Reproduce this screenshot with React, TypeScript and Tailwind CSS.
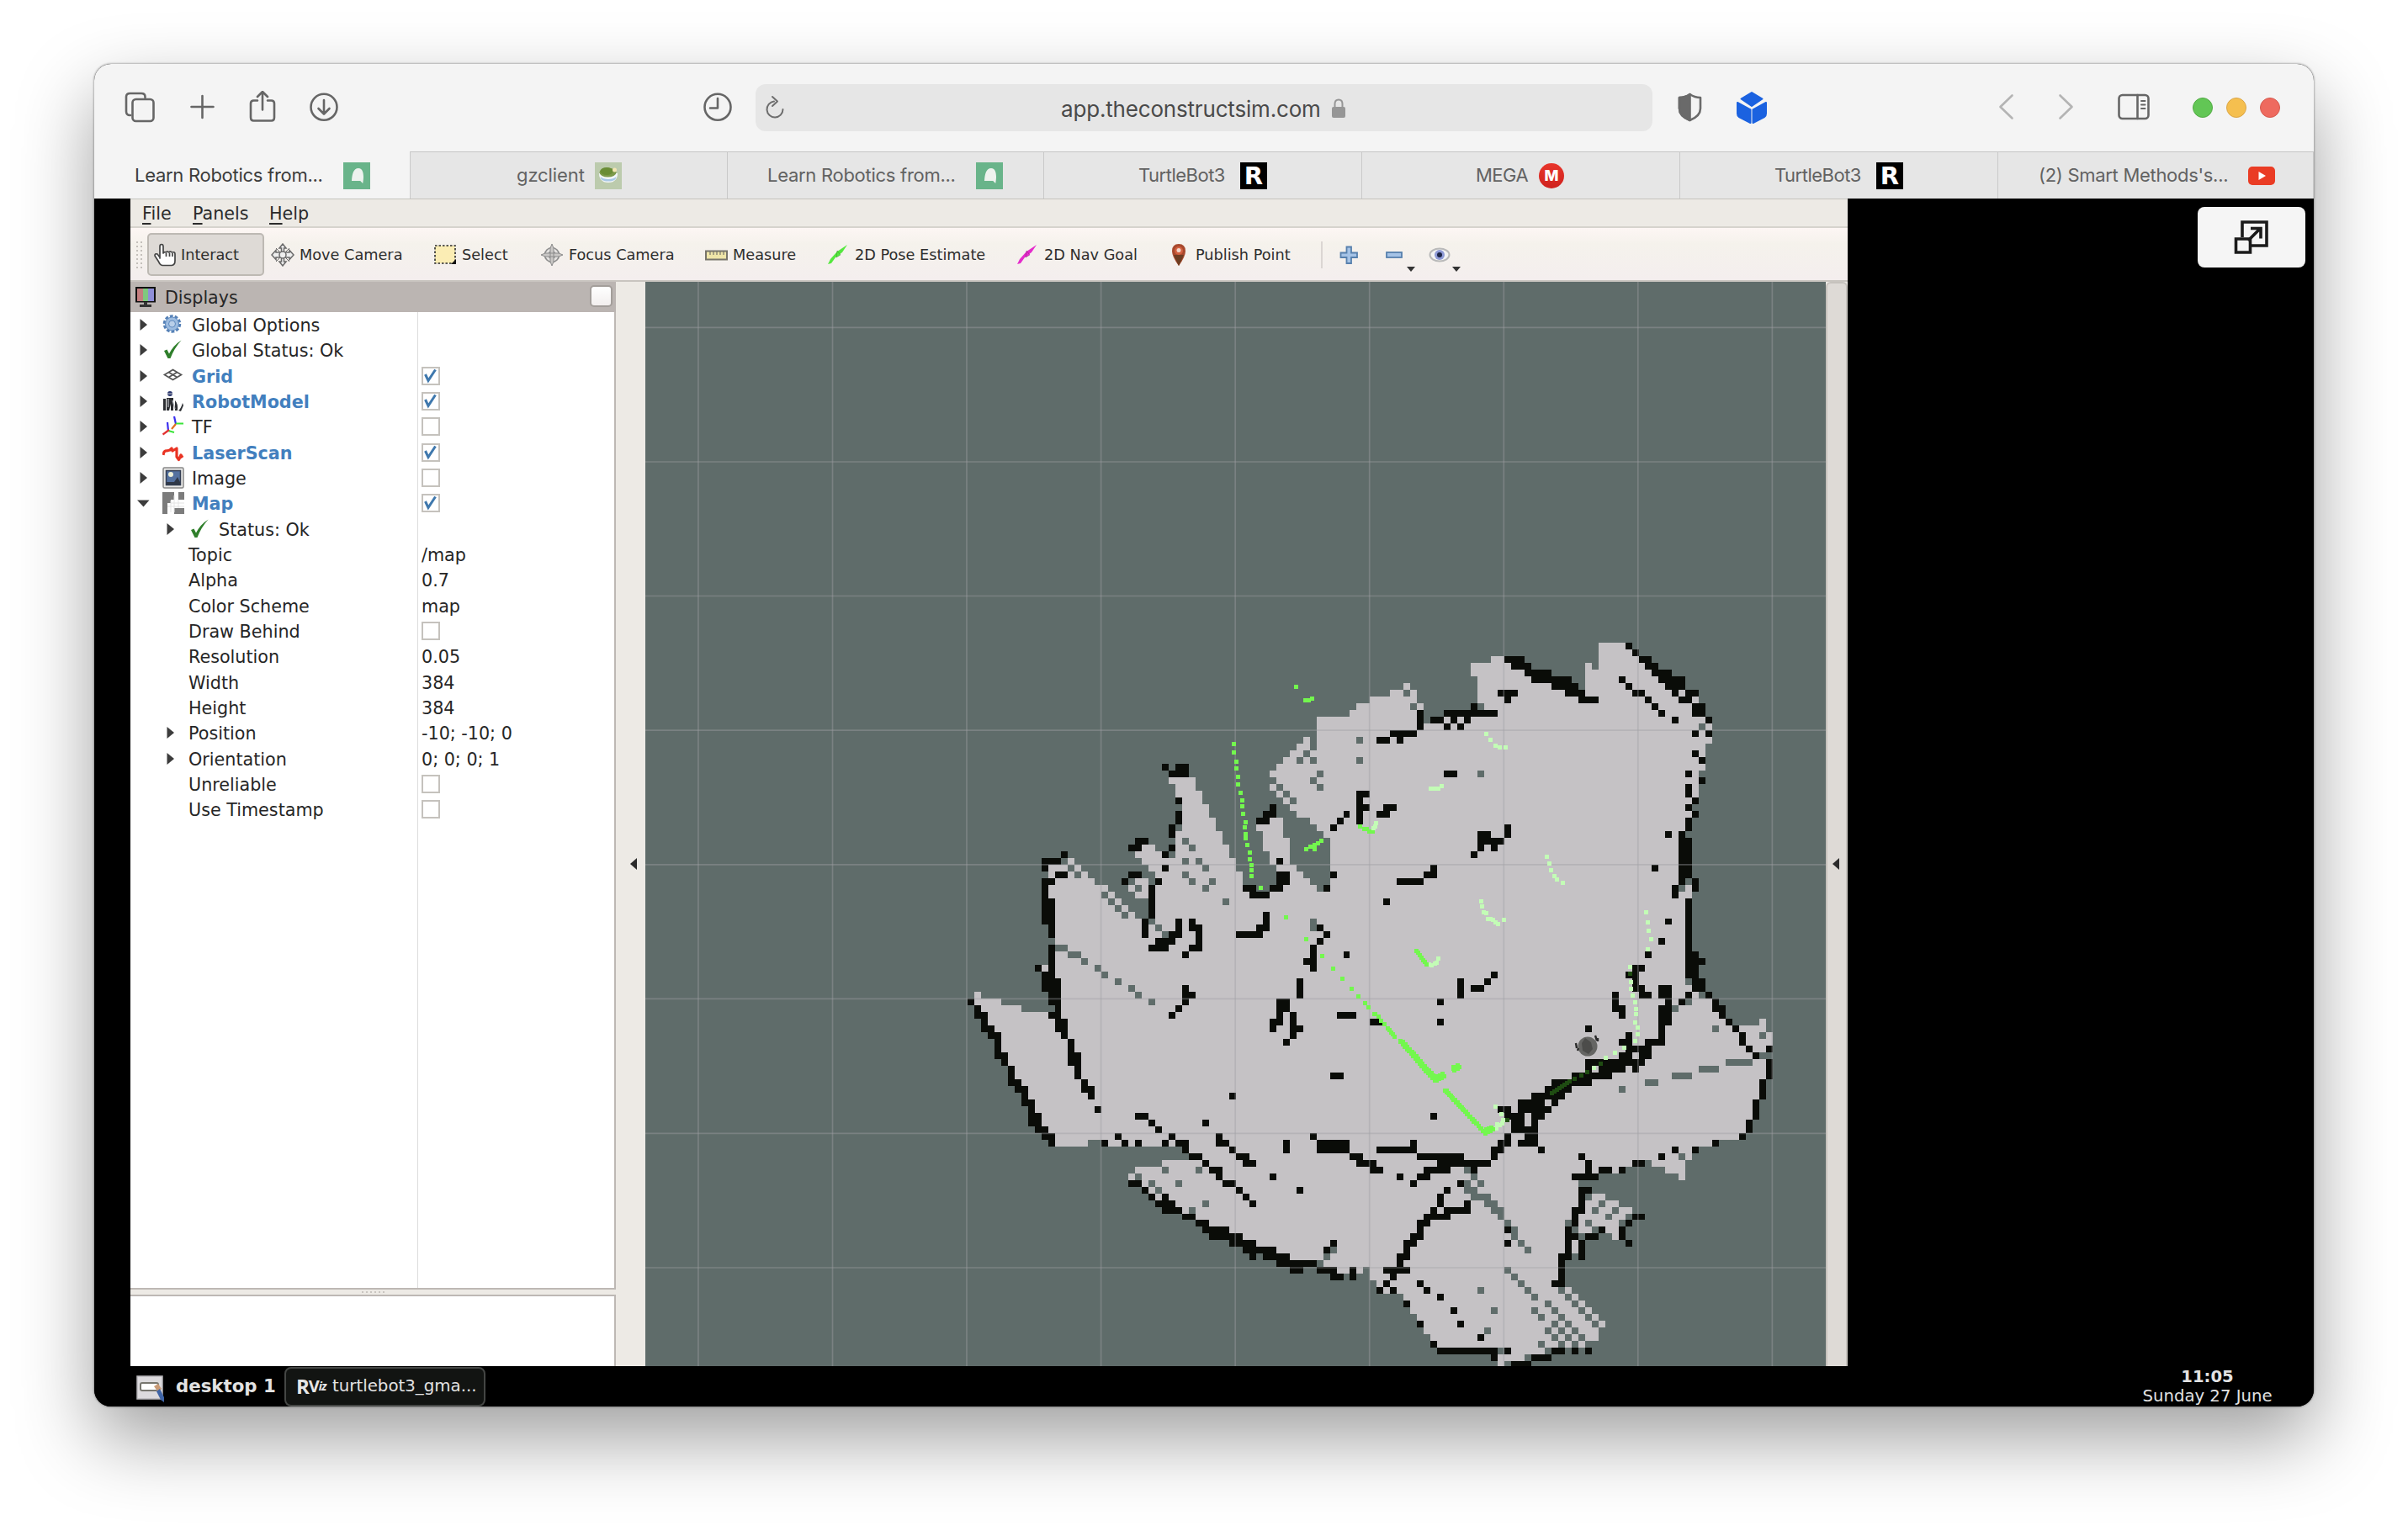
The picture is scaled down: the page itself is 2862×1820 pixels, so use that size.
import React from "react";

/* ------------------------------------------------------------------ */
/* Occupancy grid                                                      */
/* ------------------------------------------------------------------ */

const CELL = 7.977;
const ORIGIN_X = 1149.8;
const ORIGIN_Y = 1027.7;
const COL_MIN = -2;
const ROW_MIN = -36;
const COLS = 126;
const ROWS = 112;

type Tile = { x: number; y: number; sx: number; sy: number };

const WEST: Tile = { x: 1140, y: 880, sx: 3, sy: 3 };
const NORTH: Tile = { x: 1580, y: 740, sx: 2.8, sy: 3 };
const EAST: Tile = { x: 1580, y: 1140, sx: 2.8, sy: 3 };
const SOUTH: Tile = { x: 1300, y: 1300, sx: 3, sy: 3 };
const MIDDLE: Tile = { x: 1450, y: 780, sx: 3, sy: 3 };

/* Each entry is "y span span ..." (one row) or "y0/y1 span ..." (a block); a span is "x0-x1" or a single cell "x0". */
const FREE: [Tile, string][] = [
  [
    MIDDLE,
    `97 655;121 608-703;145 536-703;168 488-727;192 464-703;216/264 345-703;240 727-780;264 345-780;288 297 345-780;312 273-321 345-780;
     336 249-780;360 225-780;384 201-780;408 177-780;432 201-780;456 177 225-780;480 201 249-780;504 225 273-780;528 249-780;552 273-780;
     576 321-780;600 345-780;624 369-780;647/815 393-780;576 177-225;600 129-225;624 153-225;647/695 153-249;695/743 177-249;743 201-273;767 201-297`,
  ],
  [
    WEST,
    `132 747-843;156 771-843;180 771-867;204 795-867;228/275 795-891;275/323 795-915;323/371 771-939;371 771-963 652-699;395 771-963 628-723;
     419 652-987 388;443 676-987 317-388 412 1131-1203;467 699-1010 317-341 388 436 1179-1227;491 723-1010 341-484 628-676 1179-1251;
     515 699-1010 317-532 604-628 652-676 1154-1275 1322-1500;539 699-1500 317-508 532 628-676;562 699-1500 341-532 556;
     586 699-1500 341-556 580;610 699-1500 341-580 604;634/1424 341-1500;802 293;897 53;921 53-149;945 77-221;969 101-341;993 101-400;
     1017 125-400;1041/1113 149-400;1113/1161 173-400;1161/1209 197-400;1209 221-400;1233/1280 245-400;1280/1328 269-400;1328/1376 293-400;
     1376 317-400;1400 341-400;1424 341-460 532-1500`,
  ],
  [
    NORTH,
    `72/120 896-1006;120 538-603 896-1028;144 470-650 849 896-1050;168 470-650 849-1073;192 492-670 849-1095;216 492-737 849-1117;
     240 492-782 849-1184;264 492-827 894-1229;288 514-1207;312 559-1207;336 380 425 470-1251;361 313-1229 1251;385 134-1274;409 134-1274;
     433/528 134-1251;528/624 134-1229;624/743 0-1207;743/935 0-1184;935/983 0-1207;983/1300 0-1184;1300/1340 0-1229`,
  ],
  [
    EAST,
    `0/693 0-1184;693/789 0-800;118 1207;143 1207-1274;167 1162-1274;191 1162-1296;215 1162-1319 1430;239 1162-1341 1363-1453;
     262 1162-1363 1386-1475;286 1162-1363 1386-1475;310 1162-1386 1408-1453;334 1162-1408;358/430 1162-1453;430/502 1162-1430;
     502/574 1162-1408;574/622 1162-1386;622 1162-1363;646 1162-1274;669 1162-1207;693 800-1207;717 800-1006 1073-1184;741 800-894 939 1117-1184;
     765 1162;789/885 0-827;837 872-916;861 849-961;885 0-804 849-1006;909 0-804 827-983;933 0-782 827-961;957 0-782 827-961;
     980 0-782 939;1004 0-782 804;1028 0-782 804;1052/1100 0-760;1100/1148 134-760;1148 157-737;1172 179-760 782;1196 246-782 804;
     1220 268-804 827;1244 268-827 849;1268 291-849 872;1291 313-872 894;1315 313-894;1339 335-894;1363 358-849;1387 603-715;
     1411 559-648;1435 559`,
  ],
  [
    SOUTH,
    `189 339-1010;213 387-1010;237 243-1010;261 148-1010;285 124-1010;309 172-1010;333 196-1010;357 220-1010;381 291-1010;405 315-1010;
     429 363-1010;453 411-1010;477 483-1010;501 530-1010;525 578-1010;549 650-1010;573 698-1010;597 794-1010;620 866-961`,
  ],
];

const UNKNOWN: [Tile, string][] = [
  [MIDDLE, `121 655;168 679;288 488;360 488 273 321;336 297;408 345;432 321;456 345 201;480 225;504 249`],
  [
    WEST,
    `299 771;347 795;371 819;395 747;419 795 843;443 867 388;467 795 412;491 819 891;515 867 628;562 939 532;539 508;586 556;610 580 628-676;
     634 676;658 699;682 723;730 341-388;754 388-436;778 436;802 484;826 508;850 556;873 604;897 628;921 676;634/682 1250`,
  ],
  [NORTH, `288 492;361 1229;528 492;911 1184;935 1162;1316 1229;1340 1184;1364 1140`],
  [
    EAST,
    `118 1229;143 1184;167 1140;239 1274;262 1430;334 1430-1475;358 1319-1408;382 1229-1296;406 1140-1207;430 1050-1095;454 961;693 1162;
     717 1050;741 447;765 470;789 447 492;813 447-492;837 470-536 849;861 514-559 894;885 536-581 872 939;909 559 916;933 581 849 782;
     957 603 872;980 603;1004 626 0;1028 648;1100 581 112;1124 603;1148 626;1172 648 492;1196 670;1220 715;1244 670 737 536;
     1268 693 760;1291 737 782;1315 715 760 804 514;1339 737 782 827;1363 693 760 804`,
  ],
  [SOUTH, `261 243 363;285 148;309 196 291;333 220;381 387;405 339;549 842;573 818;597 794;620 961`],
];

const OCCUPIED: [Tile, string][] = [
  [
    WEST,
    `84 723 771-819;108 747-819;204 771;251/299 771;299/347 747;347 628-676;371 604-652 747;395 365 723;419 293-365 1130;443 293 723;
     467 341-388 604-652 1130-1178 1322;491 293-341 580 699 1130-1178;515/634 676;515 293 1010-1058 1106-1154 1298;539 293 1034-1106;
     562/658 293-341;658/706 317;610/658 1082;658 1058-1106;682 987-1082;634/706 652;634 771 819;658 771 819-867;682 747-795 843;
     706 699-771 843;730 676-747 819-867;754 795;658 1274;682 1298;706 1274;730/826 1250;778 1226-1274;754 1369;850/921 1202;
     730/850 317;802 269;826 293-341;850/897 293-365;897/945 317-365;945 341;969 317-365;993/1041 341-388;1041 365;1065/1113 388;
     1113/1161 388-436;1161/1209 412;1209 436;1233 436-484;1257 460;1304 484;1328 628-676;1352 676 867;1376 699;873/945 795;
     897 795-843;921 30 1130-1178;945 53 771 1130-1178;969 53-101 747 1130 1178 1345-1417;993 77 1106-1154 1178 1465-1500;
     1017 77-125 1106 1178-1226;1041 101-149 1178;1065 125 1154;1089 125;1113 125-173;1137 149;1161 173;1185 173 1322-1369;
     1209 173-221;1233 197-245;1257 221 963;1280 221-269;1304 245;1328 245-293;1352 245-293;1376 269-317;1400 293-341;1424 317;
     228 1106;251 1082-1130 1369;275 1058-1106 1345;299 1322;180 1417-1465;204/299 1417;228 1417-1465`,
  ],
  [
    NORTH,
    `72 985;96 1006;120 581-650 1028-1073;144 603-670 1050-1095;168 650-737 1073-1140;192 670-804 1095-1184 961;216 737-827 1117-1184 983;
     240 782-849 559-626 1006-1050 1140 1184-1229;264 827-894 581 1050 1162-1207;288 470 1073 1207-1251;312 380-559 1095 1207-1251;
     336 335-380 402 447 1140 1251;361 380 425;312/385 291;385 201-291 1207 1251;409 157-201 224;457 1207;480 1229;528 380-425 1184;
     552 1229;576/624 1184;624 1207;648 1184;672 1207;695/743 1184;743 1162 1117 492-536;767/911 1162-1207;767 492-581;791 492 536;
     815 470;719/767 581;863 335 1073;887 313-358 0;911 224-313 1162 1207;935 1140 1207;959 1140;983/1172 1184;983 179;1052 1117;
     1124 1095;1172 1050 45 1184-1229;1196 1184-1251;1220/1268 1184-1229;1268/1316 1207-1251;648 90-134 179-224;672 157-201`,
  ],
  [
    EAST,
    `22 1006-1050;46 983-1028 536;70 1006 514;94 1006-1050 1095-1140 470-514;118 1028-1073 1095-1140 1184 1251;143 1117 1162 1274 358;
     167/239 1095-1140;167 1274-1319;191 1296;215 1319 358;239 1341 849;262 1363;286 1363;310 1386 1453;334 1408;358/430 1453;430/502 1430;
     502/574 1408;574/622 1386;622 1363;646 1274;669 1140 1207;693 1095;717 1006-1050;239/286 1095;286 1050-1117;262 983;
     286 961-1006;310 983-1073;334 961-1006 1028-1073;358 849-1050;382 849 894-983 1006;406 804-939;430 737-872;454 715-804;
     478 670-782;502 626-715 737;526 559-603 626-737;550 581-648 670-715;574 603-648 670;598 603-693;622 581 648-693;
     646 559-603 626-693 268;669 536-581 693 157-291;693 291-447 536;717 358-536;741 313-402 470;765 291-335 224;789 268 425;
     813 380;837/885 358;861 447;885 335 380-470;909 313-402;933 291-335;957 291;980 268-313;1004 246-291;1028 246;1052 224-268;
     1076 224;1100 179-268;1124 201;1148 179 291;1172 157 201 313;1196 358;1220 246;1244 402;1291 291 425;1339 492;1363 335;
     646/693 0-68;693 68-112;717 90-157;741 134-179;406 0-45;550 335;191 23-90;215 134-179;70/143 425;118/191 939;167/215 961;
     693 827;717/765 849;741 894-939 961;765 804-894;813 827-872;837/885 827;885 804-849;909 804;933 804;957/1076 782;957 894;
     980 782-827 849-894;1004/1076 827;1052 760-804;1076/1148 760;1148 737-782;909 1006-1050;933 983;957/1004 961;1004 983;
     957 581;1004 581 0;1100 0 68;1124 0-45 68;1387 360-559 581 737-782 804 849;1411 536 670-737;1435 603-670`,
  ],
  [
    SOUTH,
    `44 4;0 483;68 148-196 1201;92 196 387;116 220;142 76 267 435 770;165 28 100 148 243 291-339 435-483;165/213 674 794-914;
     189 315 483;213 339-387 507-555 914-961;237 387 530-578 937-1009;261 411-459 985-1033;285 435 626 1081;309 459-507 124-172;
     333 507 172 722;357 530 196 243;381 554 220-291;405 243-315;429 315-363;453 363-411;477 387-483;501 411-530;525 483-578 842;
     549 530-650 818;573 554 602-698;597 650-794;620 698-746 794-866 914;644 842-890 914`,
  ],
];

function buildCells() {
  const cells = new Uint8Array(COLS * ROWS);
  const paint = (layer: [Tile, string][], value: number) => {
    for (const [tile, text] of layer) {
      const col = (x: number) => Math.round((x / tile.sx + tile.x - ORIGIN_X) / CELL);
      const row = (y: number) => Math.round((y / tile.sy + tile.y - ORIGIN_Y) / CELL);
      for (const entry of text.split(";")) {
        const [rows, ...spans] = entry.trim().split(/\s+/);
        const [y0, y1] = rows.split("/").map(Number);
        const r0 = row(y0);
        const r1 = y1 === undefined ? r0 + 1 : row(y1);
        for (const span of spans) {
          const [x0, x1] = span.split("-").map(Number);
          const c0 = col(x0);
          const c1 = x1 === undefined ? c0 + 1 : col(x1);
          for (let r = r0; r < r1; r++)
            for (let c = c0; c < c1; c++) cells[(r - ROW_MIN) * COLS + (c - COL_MIN)] = value;
        }
      }
    }
  };
  paint(FREE, 1);
  paint(UNKNOWN, 0);
  paint(OCCUPIED, 2);
  return cells;
}

function runsPath(cells: Uint8Array, value: number) {
  let d = "";
  for (let r = 0; r < ROWS; r++) {
    const y0 = Math.round(ORIGIN_Y + (r + ROW_MIN) * CELL);
    const y1 = Math.round(ORIGIN_Y + (r + 1 + ROW_MIN) * CELL);
    let c = 0;
    while (c < COLS) {
      if (cells[r * COLS + c] !== value) {
        c++;
        continue;
      }
      const start = c;
      while (c < COLS && cells[r * COLS + c] === value) c++;
      const x0 = Math.round(ORIGIN_X + (start + COL_MIN) * CELL);
      const x1 = Math.round(ORIGIN_X + (c + COL_MIN) * CELL);
      d += `M${x0} ${y0}H${x1}V${y1}H${x0}Z`;
    }
  }
  return d;
}

const CELLS = buildCells();
const FREE_PATH = runsPath(CELLS, 1);
const OCCUPIED_PATH = runsPath(CELLS, 2);

/* ------------------------------------------------------------------ */
/* Laser scan                                                          */
/* ------------------------------------------------------------------ */

type Scan = { tile: Tile; color: string; dots?: number[][]; lines?: number[][] };

const HIT = "#73f74e";
const PALE = "#c3fcb6";
const DARK = "#1f4c12";

const SCANS: Scan[] = [
  {
    tile: MIDDLE,
    color: HIT,
    dots: [
      [270, 108], [303, 156], [315, 156], [327, 151], [49, 314], [49, 342], [59, 376], [59, 400], [64, 429], [64, 457],
      [73, 486], [78, 514], [78, 534], [83, 562], [92, 591], [88, 610], [92, 634], [92, 648], [97, 672], [106, 701],
      [106, 725], [111, 745], [111, 764], [111, 783], [308, 687], [322, 678], [336, 687], [336, 674], [348, 668],
      [361, 658], [498, 606], [513, 615], [523, 616], [532, 625], [543, 625],
    ],
  },
  { tile: MIDDLE, color: PALE, dots: [[548, 614], [552, 606], [557, 596], [753, 471], [765, 471], [775, 471]] },
  {
    tile: WEST,
    color: HIT,
    dots: [
      [1075, 526], [1165, 631], [1237, 708], [1295, 770], [1333, 813], [1367, 851], [1400, 885], [1424, 913],
      [1448, 937], [1458, 952], [1482, 976], [1494, 986],
    ],
  },
  {
    tile: NORTH,
    color: PALE,
    dots: [
      [522, 396], [536, 419], [554, 439], [567, 444], [586, 444], [338, 592], [350, 592], [362, 592], [375, 582],
      [724, 836], [732, 858], [737, 884], [750, 903], [758, 917], [777, 927], [504, 994], [508, 1013], [514, 1032],
      [521, 1037], [527, 1056], [536, 1056], [545, 1060], [554, 1070], [562, 1075], [580, 1061], [1054, 1032],
      [1059, 1070], [1063, 1099], [1072, 1128], [1059, 1166], [1000, 1228], [1004, 1281], [1004, 1305], [1009, 1329],
      [1018, 1353], [1021, 1377], [1021, 1396], [1018, 1425], [331, 1220], [340, 1221], [350, 1217], [357, 1212], [362, 1199],
    ],
  },
  { tile: NORTH, color: DARK, dots: [[1000, 1252]] },
  { tile: NORTH, color: HIT, lines: [[290, 1170, 322, 1220]] },
  { tile: EAST, color: PALE, dots: [[1027, 243], [1027, 267], [1018, 292], [982, 316], [951, 334], [920, 353], [880, 388], [553, 526], [573, 552], [577, 575], [575, 585], [567, 592], [558, 590], [556, 604]] },
  { tile: EAST, color: DARK, dots: [[902, 374], [857, 402], [839, 416], [817, 426], [592, 573]], lines: [[798, 436, 741, 479]] },
  {
    tile: EAST,
    color: HIT,
    dots: [[151, 196], [164, 205], [173, 219], [182, 233]],
    lines: [
      [195, 247, 218, 276], [237, 291, 357, 434], [246, 296, 346, 416], [237, 295, 350, 434], [357, 434, 382, 418],
      [352, 424, 376, 410], [384, 468, 518, 622], [390, 470, 505, 604], [518, 622, 545, 608], [515, 612, 540, 602],
      [412, 391, 432, 385], [416, 397, 426, 380], [412, 385, 426, 392],
    ],
  },
];

function scanPath({ tile, dots = [], lines = [] }: Scan) {
  const points = dots.map(([x, y]) => [x / tile.sx + tile.x, y / tile.sy + tile.y]);
  for (const [x0, y0, x1, y1] of lines) {
    const ax = x0 / tile.sx + tile.x;
    const ay = y0 / tile.sy + tile.y;
    const bx = x1 / tile.sx + tile.x;
    const by = y1 / tile.sy + tile.y;
    const n = Math.max(1, Math.ceil(Math.hypot(bx - ax, by - ay) / 4));
    for (let i = 0; i <= n; i++) points.push([ax + ((bx - ax) * i) / n, ay + ((by - ay) * i) / n]);
  }
  return points.map(([x, y]) => `M${Math.round(x - 2.5)} ${Math.round(y - 2.5)}h5v5h-5z`).join("");
}

const GRID_X = [829.9, 989.5, 1149, 1308.6, 1468.2, 1627.7, 1787.3, 1946.8, 2106.4];
const GRID_Y = [389.4, 549, 708.5, 868.2, 1027.8, 1187.4, 1347.3, 1507];

function MapView() {
  return (
    <svg viewBox="767 335 1403 1289" className="block h-[1289px] w-[1403px] shrink-0 bg-[#5f6c6a]">
      <g shapeRendering="crispEdges">
        <path d={FREE_PATH} fill="#c5c2c5" />
        <path d={OCCUPIED_PATH} fill="#0a0c08" />
      </g>
      <g stroke="#a0a0a4" strokeOpacity=".42" strokeWidth="1.7">
        {GRID_X.map((x) => (
          <path key={x} d={`M${x} 335V1624`} />
        ))}
        {GRID_Y.map((y) => (
          <path key={y} d={`M767 ${y}H2170`} />
        ))}
      </g>
      <g shapeRendering="crispEdges">
        {SCANS.map((scan, i) => (
          <path key={i} d={scanPath(scan)} fill={scan.color} />
        ))}
      </g>
      <g>
        <circle cx="1887" cy="1244" r="11.5" fill="#656563" />
        <path d="M1884 1234l7 5 2 8-5 6-7-4-1-9z" fill="#4c4c4a" />
        <path d="M1873 1240l1 6M1876 1246l-1 3M1896 1231l2 6M1899 1234v4" stroke="#2a2a2a" strokeWidth="2.4" fill="none" />
      </g>
    </svg>
  );
}

/* ------------------------------------------------------------------ */
/* Browser chrome                                                      */
/* ------------------------------------------------------------------ */

function RobotFavicon() {
  return (
    <svg viewBox="0 0 32 32" className="size-8 shrink-0">
      <rect width="32" height="32" fill="#69b48a" />
      <path d="M10 22C10.500 14 12 7 18 7c5 0 6 6 6 10 0 3-.3 5-.8 8l-3-3z" fill="#eef2ee" />
    </svg>
  );
}

function TeaFavicon() {
  return (
    <svg viewBox="0 0 32 32" className="size-8 shrink-0">
      <rect width="32" height="32" fill="#bccbad" />
      <path d="M5 13c0 6 3 11 11 11s11-5 11-11z" fill="#f4f7f9" />
      <path d="M6.500 17c2 2 5.500 3 9.500 3s7.500-1 9.500-3l-1 3c-2 2-5 2.500-8.500 2.500S9.500 22 7.500 20z" fill="#a9c8e6" />
      <ellipse cx="15.500" cy="12" rx="10" ry="5.500" fill="#7d9a4a" />
      <ellipse cx="14" cy="10.500" rx="7.500" ry="4.500" fill="#6a8d36" />
      <circle cx="23.500" cy="9" r="2.500" fill="#f3e6b4" />
    </svg>
  );
}

function RFavicon() {
  return (
    <div className="flex size-8 shrink-0 items-center justify-center bg-black font-['DejaVu_Sans',sans-serif] text-[29px] leading-8 font-bold text-white">
      R
    </div>
  );
}

function MegaFavicon() {
  return (
    <div className="flex size-[30px] shrink-0 items-center justify-center rounded-full bg-linear-to-b from-[#e8352c] to-[#cf211d] text-[18px] leading-[30px] font-extrabold text-white">
      M
    </div>
  );
}

function YoutubeFavicon() {
  return (
    <svg viewBox="0 0 32 32" className="size-8 shrink-0">
      <rect y="5" width="32" height="22" rx="5" fill="#ea3c24" />
      <path d="M12.500 11l8.500 5-8.500 5z" fill="#fff" />
    </svg>
  );
}

type Tab = { label: string; icon: React.ReactNode; width: string; pad: string; gap: string; text: string; active?: boolean };

const TABS: Tab[] = [
  { label: "Learn Robotics from...", icon: <RobotFavicon />, width: "w-[376px]", pad: "pl-12", gap: "w-[248px]", text: "tracking-[-0.28px]", active: true },
  { label: "gzclient", icon: <TeaFavicon />, width: "w-[377px]", pad: "pl-[126px]", gap: "w-[93px]", text: "tracking-[-0.1px]" },
  { label: "Learn Robotics from...", icon: <RobotFavicon />, width: "w-[376px]", pad: "pl-[47px]", gap: "w-[248px]", text: "tracking-[-0.28px]" },
  { label: "TurtleBot3", icon: <RFavicon />, width: "w-[378px]", pad: "pl-[112px]", gap: "w-[121px]", text: "tracking-[-0.5px]" },
  { label: "MEGA", icon: <MegaFavicon />, width: "w-[378px]", pad: "pl-[135px]", gap: "w-[75px]", text: "tracking-[-0.5px]" },
  { label: "TurtleBot3", icon: <RFavicon />, width: "w-[378px]", pad: "pl-[112px]", gap: "w-[121px]", text: "tracking-[-0.5px]" },
  { label: "(2) Smart Methods's...", icon: <YoutubeFavicon />, width: "w-[375px]", pad: "pl-[48px]", gap: "w-[249px]", text: "tracking-[-0.3px]" },
];

function BrowserToolbar() {
  const stroke = { fill: "none", stroke: "#666", strokeWidth: 2.6, strokeLinecap: "round", strokeLinejoin: "round" } as const;
  return (
    <div className="flex h-26 shrink-0 items-center bg-[#f4f4f4]">
      <svg viewBox="0 1 40 40" className="ml-[35px] size-10" {...stroke}>
        <path d="M8 30H7.500Q3 30 3 25.500V8Q3 4 7.500 4H21Q25.500 4 25.500 8v1" />
        <rect x="10.500" y="11" width="25" height="26" rx="4" />
      </svg>
      <svg viewBox="0 1 40 40" className="ml-[33px] size-10" {...stroke}>
        <path d="M20.500 7v26M7.500 20h26" />
      </svg>
      <svg viewBox="0 .5 40 40" className="ml-8 size-10" {...stroke}>
        <path d="M14 12H9.500Q6 12 6 15.500V32q0 4 3.500 4h21q3.500 0 3.500-4V15.500Q34 12 30.500 12H26M20 23V1.500M14 7.500l6-6 6 6" />
      </svg>
      <svg viewBox="0 0 40 40" className="ml-[33px] size-10" {...stroke}>
        <circle cx="20" cy="19.300" r="15.500" />
        <path d="M20 11v16M13.500 21l6.500 6.500 6.500-6.500" />
      </svg>
      <svg viewBox="0 0 40 40" className="ml-[428px] size-10" {...stroke}>
        <circle cx="20" cy="19.300" r="15.500" />
        <path d="M20 9v11.500h-9" />
      </svg>
      <div className="ml-[25px] flex h-14 w-[1066px] items-center rounded-xl bg-[#e6e6e6]">
        <svg viewBox="0 0 26 30" className="ml-[10px] h-[30px] w-[26px]" {...stroke} stroke="#6e6e6e" strokeWidth={2}>
          <path d="M12 7.500A9.500 9.500 0 1 0 22.500 17M10 2l6 5.500-6 5.500" />
        </svg>
        <div className="ml-[327px] w-[321px] pt-[3px] text-[26px] leading-8 whitespace-nowrap text-[#4a4a4a] tracking-[-0.18px]">
          app.theconstructsim.com
        </div>
        <svg viewBox="0 0 18 26" className="mt-[2px] h-[26px] w-[18px]">
          <path d="M4.500 12V7.500q0-5 4.500-5t4.500 5V12" fill="none" stroke="#969696" strokeWidth="2" />
          <rect x="1" y="11" width="16" height="13" rx="2" fill="#969696" />
        </svg>
      </div>
      <svg viewBox="0 0.500 40 40" className="ml-[25px] size-10" {...stroke} stroke="#6a6a6a">
        <path d="M19.500 4.500q5.500 4 12.500 4v13q0 9-12.500 14Q7 30.500 7 21.500v-13q7 0 12.500-4z" />
        <path d="M19.500 4.500v31Q7 30.500 7 21.500v-13q7 0 12.500-4z" fill="#6a6a6a" />
      </svg>
      <svg viewBox="0 0 40 40" className="ml-[33px] size-10" fill="#1b62e0" stroke="#1b62e0" strokeWidth="2" strokeLinejoin="round">
        <path d="M20 2l12.500 7.500L20 18 7.500 9.500z" />
        <path d="M3 14l15.500 8.500V38L5 31Q3 30 3 27z" />
        <path d="M37 14l-15.500 8.500V38L35 31q2-1 2-4z" />
      </svg>
      <svg viewBox="0 1 40 40" className="ml-[263px] size-10" {...stroke} stroke="#b4b4b4">
        <path d="M26.500 6.500L12.500 20l14 13.500" />
      </svg>
      <svg viewBox="0 1 40 40" className="ml-[30px] size-10" {...stroke} stroke="#b4b4b4">
        <path d="M13.500 6.500L27.500 20l-14 13.500" />
      </svg>
      <svg viewBox="0 1 40 40" className="ml-[41px] size-10" {...stroke}>
        <rect x="2.500" y="6" width="35" height="28" rx="4" />
        <path d="M24.500 6v28" />
        <path d="M29 13h4.500M29 17.500h4.500M29 22h4.500" strokeWidth="2" />
      </svg>
      <div className="ml-[50px] flex gap-4">
        <div className="size-6 rounded-full border border-[#53ab45] bg-[#62c655]" />
        <div className="size-6 rounded-full border border-[#dba648] bg-[#f5bf4f]" />
        <div className="size-6 rounded-full border border-[#d65a4e] bg-[#ee6a5f]" />
      </div>
    </div>
  );
}

function TabBar() {
  return (
    <div className="flex h-14 shrink-0 bg-[#e6e6e6]">
      {TABS.map((tab, i) => (
        <div
          key={i}
          className={`flex shrink-0 items-center border-r border-[#c9c9c9] ${tab.width} ${tab.pad} ${
            tab.active ? "bg-[#f4f4f4] pt-px text-[#3c3c3c]" : "border-t border-t-[#c4c4c4] text-[#626262]"
          }`}
        >
          <div className={`${tab.gap} ${tab.text} shrink-0 pb-px text-[22px] leading-7 whitespace-nowrap`}>{tab.label}</div>
          {tab.icon}
        </div>
      ))}
    </div>
  );
}

/* ------------------------------------------------------------------ */
/* RViz window                                                         */
/* ------------------------------------------------------------------ */

function MenuBar() {
  return (
    <div className="flex h-[35px] shrink-0 items-center border-t border-b-2 border-[#d6d3cd] border-t-[#c6c4be] bg-[#edeae5] pt-[2px] pl-[14px] text-[20.700px] leading-6 text-[#2b2b2b]">
      {[
        ["F", "ile", "w-[60px]"],
        ["P", "anels", "w-[91px]"],
        ["H", "elp", "w-[80px]"],
      ].map(([first, rest, width]) => (
        <div key={first} className={`whitespace-nowrap ${width}`}>
          <span className="underline decoration-2 underline-offset-4">{first}</span>
          {rest}
        </div>
      ))}
    </div>
  );
}

function Arrow({ color }: { color: string }) {
  return (
    <svg viewBox="0 0 28 28" className="size-7">
      <path d="M2 25l3-6 8-9 12-8-6 9-8 6-5 7z" fill={color} />
      <path d="M13 9l4 5-5 3z" fill={color} stroke="#0003" />
    </svg>
  );
}

type Tool = { label: string; icon: React.ReactNode; width: string };

const TOOLS: Tool[] = [
  {
    label: "Move Camera",
    width: "w-[193px]",
    icon: (
      <svg viewBox="0 0 28 28" className="size-7" fill="#eee" stroke="#6b6b6b" strokeWidth="1.500">
        <path d="M14 1l4 5h-2.500v5H22V8.500l5 5.500-5 5.500V17h-6.500v5H18l-4 5-4-5h2.500v-5H6v2.500L1 14l5-5.500V11h6.500V6H10z" />
        <path d="M6 6l16 16M22 6L6 22" strokeWidth="1" />
        <circle cx="14" cy="14" r="4" />
      </svg>
    ),
  },
  {
    label: "Select",
    width: "w-[127px]",
    icon: (
      <svg viewBox="0 0 28 28" className="size-7">
        <rect x="2" y="3" width="24" height="21" fill="#fbedb4" stroke="#2b2b2b" strokeWidth="1.600" strokeDasharray="2.500 2" />
        <path d="M27 19v6h-6z" fill="#111" />
      </svg>
    ),
  },
  {
    label: "Focus Camera",
    width: "w-[195px]",
    icon: (
      <svg viewBox="0 0 28 28" className="size-7" fill="none" stroke="#8d8d8d" strokeWidth="1.700">
        <circle cx="14" cy="14" r="8.500" fill="#e4e2e0" />
        <circle cx="14" cy="14" r="4" />
        <path d="M14 1l2 5v16l-2 5-2-5V6zM1 14l5-2h16l5 2-5 2H6z" fill="#c9c7c5" strokeWidth="1" />
      </svg>
    ),
  },
  {
    label: "Measure",
    width: "w-[145px]",
    icon: (
      <svg viewBox="0 0 28 28" className="size-7">
        <rect x="2" y="9.500" width="25" height="10" fill="#efe5a8" stroke="#77746b" strokeWidth="2" />
        <path d="M7 10v4M11 10v4M15 10v4M19 10v4M23 10v4" stroke="#77746b" strokeWidth="1.200" />
      </svg>
    ),
  },
  { label: "2D Pose Estimate", width: "w-[225px]", icon: <Arrow color="#55e83f" /> },
  { label: "2D Nav Goal", width: "w-[180px]", icon: <Arrow color="#e52ccb" /> },
  {
    label: "Publish Point",
    width: "w-[183px]",
    icon: (
      <svg viewBox="0 0 28 28" className="size-7">
        <path d="M14 1q8 0 8 8.500Q22 16 14 27 6 16 6 9.500 6 1 14 1z" fill="#a8492d" />
        <path d="M8 14q2 5 6 13 4-8 6-13z" fill="#6d3d22" />
        <circle cx="14" cy="9" r="5" fill="#d2603f" />
        <circle cx="14" cy="8.500" r="2.500" fill="#f3d8cc" />
      </svg>
    ),
  },
];

function RvizToolbar() {
  return (
    <div className="flex h-[64px] shrink-0 items-center border-b-2 border-[#c9c5c0] bg-linear-to-b from-[#fdf6f4] via-[#f5f2ec] via-30% to-[#f4eeee] pt-px text-[17.700px] text-[#2e2e2e]">
      <div className="ml-[7px] grid grid-cols-2 gap-[3px]">
        {Array.from({ length: 14 }, (_, i) => (
          <div key={i} className="size-[2px] bg-[#c4c0bb]" />
        ))}
      </div>
      <div className="ml-[6px] flex h-[51px] w-[139px] items-center rounded-[5px] border-2 border-[#bdb9b3] bg-[#dedad6] pl-[5px]">
        <svg viewBox="0 0 28 28" className="size-7" fill="#fff" stroke="#444" strokeWidth="1.700" strokeLinejoin="round">
          <path d="M8 18V4q0-2.500 2-2.500T12 4v8q1-2 3.500-1 1-1.500 3.500 0 1-1.500 3.500 0Q26 10 26 13v8q0 5-4 5.500H11Q8 26 6.500 22L2 15q0-3 3-2l3 4z" />
          <path d="M15.500 12v4M19.500 12v4M23 12v4" />
        </svg>
        <span className="ml-[5px] pt-px">Interact</span>
      </div>
      <div className="ml-2 flex">
        {TOOLS.map((tool) => (
          <div key={tool.label} className={`flex shrink-0 items-center gap-[6px] whitespace-nowrap ${tool.width}`}>
            {tool.icon}
            <span className="pt-px">{tool.label}</span>
          </div>
        ))}
      </div>
      <div className="h-8 w-[2px] bg-[#dbd6d3]" />
      <svg viewBox="0 0 180 40" className="ml-[18px] h-10 w-[180px]">
        <path d="M10.500 10.500h5.500v7h7v5.500h-7v7h-5.500v-7h-7v-5.500h7z" fill="#a5c3e6" stroke="#5780ad" strokeWidth="1.800" />
        <rect x="58" y="17" width="18" height="6" fill="#a5c3e6" stroke="#5780ad" strokeWidth="1.800" />
        <path d="M82 34h10l-5 6z" fill="#333" />
        <ellipse cx="121" cy="20" rx="11.500" ry="7.500" fill="#f3f3f3" stroke="#b9b9b9" strokeWidth="2" />
        <circle cx="121" cy="20" r="6" fill="#8e9ad6" />
        <circle cx="121" cy="20" r="3" fill="#1d2547" />
        <path d="M136 34h10l-5 6z" fill="#333" />
      </svg>
    </div>
  );
}

const ICONS: Record<string, React.ReactNode> = {
  gear: (
    <svg viewBox="0 0 26 26" className="size-[26px]">
      <circle cx="11.500" cy="12" r="9" fill="none" stroke="#5580b6" strokeWidth="3.500" strokeDasharray="3.700 1.950" />
      <circle cx="11.500" cy="12" r="8" fill="#9dbce0" stroke="#5f8bc0" />
      <circle cx="11.500" cy="12" r="4" fill="#b9cfe9" stroke="#5f8bc0" />
    </svg>
  ),
  check: (
    <svg viewBox="0 0 26 26" className="size-[26px]">
      <path d="M2 14l3.500-1.500L8 17.500Q13 7.500 22.500 1.500 14 11 9.500 23H6.500z" fill="#2f7f2b" />
    </svg>
  ),
  grid: (
    <svg viewBox="0 0 26 26" className="size-[26px]" fill="none" stroke="#555" strokeWidth="1.700">
      <path d="M12.500 5.500l10 6-10 6-10-6zM7.500 8.500l10 6M17.500 8.500l-10 6" />
    </svg>
  ),
  robot: (
    <svg viewBox="0 0 26 26" className="size-[26px]">
      <circle cx="9" cy="4" r="3" fill="#28356e" />
      <path d="M6 4h6" stroke="#ccc" />
      <path d="M5 9h8v15h-3v-8l-2 8H5zM1 10h3v14H1zM15 12q4 4 3 12h-3zM19 24q3-2 5-9l1 3-3 7z" fill="#2d2f33" />
      <path d="M7 10v10M12 12l3 10" stroke="#b9bcc2" strokeWidth="1.200" />
    </svg>
  ),
  tf: (
    <svg viewBox="0 0 26 26" className="size-[26px]" fill="none" strokeWidth="2.200">
      <path d="M14 1l2 9M6 8l1 10" stroke="#3a2ff0" />
      <path d="M16 9.500h9M7 18l7 2" stroke="#3be43a" />
      <path d="M16 10l-5 6" stroke="#e0701f" />
      <path d="M8 17l-7.500 5.500" stroke="#e33030" />
    </svg>
  ),
  laser: (
    <svg viewBox="0 0 26 26" className="size-[26px]" fill="none" stroke="#e93323" strokeWidth="3.200" strokeLinejoin="round">
      <path d="M1 16q1-6 4-5l4-1 2-2 1 3 5-3v10l2.500 3.500L22 16l2 3" />
    </svg>
  ),
  image: (
    <svg viewBox="0 0 26 26" className="size-[26px]">
      <rect x="1" y="1" width="24" height="24" rx="1.500" fill="#e9e8e6" stroke="#888" strokeWidth="1.500" />
      <rect x="4.500" y="4.500" width="17" height="17" fill="#54719f" stroke="#333d52" strokeWidth="1.500" />
      <circle cx="10" cy="9" r="3" fill="#eef0d8" />
      <path d="M5 18h16v3H5zM14 18l4-6 3 6z" fill="#2f3848" />
    </svg>
  ),
  map: (
    <svg viewBox="0 0 26 26" className="size-[26px]">
      <path d="M0 0h14v9H10v4H6v13H0zM19 0h7v9h-7zM14 19h12v7H14z" fill="#7c7c7c" />
      <path d="M10 13h16M6 17h20M14 4v20M19 9v10M10 10v14" stroke="#e3e3e3" />
    </svg>
  ),
};

type Row = { label: string; icon?: string; level?: number; arrow?: "right" | "down"; bold?: boolean; value?: string; checked?: boolean };

const ROWS_DATA: Row[] = [
  { label: "Global Options", icon: "gear", arrow: "right" },
  { label: "Global Status: Ok", icon: "check", arrow: "right" },
  { label: "Grid", icon: "grid", arrow: "right", bold: true, checked: true },
  { label: "RobotModel", icon: "robot", arrow: "right", bold: true, checked: true },
  { label: "TF", icon: "tf", arrow: "right", checked: false },
  { label: "LaserScan", icon: "laser", arrow: "right", bold: true, checked: true },
  { label: "Image", icon: "image", arrow: "right", checked: false },
  { label: "Map", icon: "map", arrow: "down", bold: true, checked: true },
  { label: "Status: Ok", icon: "check", level: 1, arrow: "right" },
  { label: "Topic", level: 1, value: "/map" },
  { label: "Alpha", level: 1, value: "0.7" },
  { label: "Color Scheme", level: 1, value: "map" },
  { label: "Draw Behind", level: 1, checked: false },
  { label: "Resolution", level: 1, value: "0.05" },
  { label: "Width", level: 1, value: "384" },
  { label: "Height", level: 1, value: "384" },
  { label: "Position", level: 1, arrow: "right", value: "-10; -10; 0" },
  { label: "Orientation", level: 1, arrow: "right", value: "0; 0; 0; 1" },
  { label: "Unreliable", level: 1, checked: false },
  { label: "Use Timestamp", level: 1, checked: false },
];

function TreeRow({ row }: { row: Row }) {
  return (
    <div className="flex h-[30.330px] items-center">
      <div className={`flex h-full w-[341px] shrink-0 items-center ${row.level ? "pl-10" : "pl-2"}`}>
        <svg viewBox="0 0 16 16" className="size-4 shrink-0">
          {row.arrow === "right" && <path d="M3.500 1l8.500 7-8.500 7z" fill="#3c3c3c" />}
          {row.arrow === "down" && <path d="M0 4.500h14.500l-7 8z" fill="#3c3c3c" />}
        </svg>
        {row.icon && <div className="ml-[14px] shrink-0">{ICONS[row.icon]}</div>}
        <div className={`pt-[2px] whitespace-nowrap ${row.icon ? "ml-[9px]" : "ml-[13px]"} ${row.bold ? "font-bold text-[#427fbe]" : ""}`}>
          {row.label}
        </div>
      </div>
      <div className="ml-[5px] whitespace-nowrap">
        {row.value && <div className="pt-[2px]">{row.value}</div>}
        {row.checked !== undefined && (
          <div className="flex size-[22px] items-center justify-center border-2 border-[#c5c2bd] bg-white">
            {row.checked && (
              <svg viewBox="0 0 18 18" className="size-[18px]">
                <path d="M2.500 7l3.500 7.500L14.500 1.500" fill="none" stroke="#3f78ad" strokeWidth="3" />
              </svg>
            )}
          </div>
        )}
      </div>
    </div>
  );
}

function DisplaysPanel() {
  return (
    <div className="flex w-[577px] shrink-0 flex-col text-[20.700px] leading-6 text-[#262626]">
      <div className="flex h-9 shrink-0 items-center bg-[#bbb5b2] pr-[4px] pl-[4px]">
        <svg viewBox="0 0 28 28" className="size-7">
          <rect x="2" y="2" width="24" height="18.500" fill="#111" />
          <path d="M4 4h7v15H4z" fill="#c47f80" />
          <path d="M11 4h6v15h-6z" fill="#7fc97f" />
          <path d="M17 4h7v15h-7z" fill="#8f8fd8" />
          <path d="M12 20h4v3h5v3H7v-3h5z" fill="#333" />
        </svg>
        <div className="ml-[9px] grow pt-[2px] text-[20.600px]">Displays</div>
        <div className="mb-[2px] h-[26px] w-[27px] rounded-[5px] border-2 border-[#a39e9a] bg-linear-to-b from-white to-[#f2efee]" />
      </div>
      <div className="relative h-[1162px] shrink-0 border-r-2 border-b-2 border-[#bdb8b4] bg-white">
        <div className="absolute inset-y-0 left-[341px] w-px bg-[#dcdcdc]" />
        {ROWS_DATA.map((row) => (
          <TreeRow key={row.label} row={row} />
        ))}
      </div>
      <div className="flex h-[6px] shrink-0 items-center justify-center gap-[3px]">
        {Array.from({ length: 6 }, (_, i) => (
          <div key={i} className="size-[2px] bg-[#c9c5c0]" />
        ))}
      </div>
      <div className="grow border-t-2 border-r-2 border-[#bdb8b4] bg-white" />
    </div>
  );
}

function Collapse() {
  return (
    <svg viewBox="0 0 10 16" className="h-4 w-[10px] shrink-0">
      <path d="M9 1v14L1 8z" fill="#2b2b2b" />
    </svg>
  );
}

function RvizWindow() {
  return (
    <div className="flex h-[1388px] w-[2041px] shrink-0 flex-col bg-[#edeae5] font-['DejaVu_Sans',sans-serif]">
      <MenuBar />
      <RvizToolbar />
      <div className="flex h-[1289px] shrink-0">
        <DisplaysPanel />
        <div className="flex w-[35px] shrink-0 items-center justify-center pt-[94px] pl-[6px]">
          <Collapse />
        </div>
        <MapView />
        <div className="flex grow items-center justify-center rounded-t-md border-2 border-b-0 border-[#c6c2bd] bg-[#dedad6] pt-[92px] pr-[3px]">
          <Collapse />
        </div>
      </div>
    </div>
  );
}

function Taskbar() {
  return (
    <div className="flex h-12 items-center bg-black pl-[50px] font-['DejaVu_Sans',sans-serif] text-[#e2e2e2]">
      <svg viewBox="0 0 36 38" className="h-[38px] w-9 shrink-0">
        <rect x="1" y="7" width="30" height="27" fill="#dcdadd" stroke="#b8b6ba" strokeWidth="1.500" />
        <rect x="5" y="15" width="21" height="9" rx="2" fill="#fff" stroke="#77766f" strokeWidth="2" />
        <path d="M21 19l5-3 4 6-4 4z" fill="#c99a76" />
        <path d="M24 25l4-3 5 10v6l-4-3z" fill="#3f64a6" />
      </svg>
      <div className="ml-[11px] w-[129px] text-[21.300px] font-bold whitespace-nowrap">desktop 1</div>
      <div className="flex h-[47px] w-[239px] items-center rounded-lg border-2 border-[#444644] bg-[#121412] pl-3">
        <div className="flex h-[30px] w-[42px] items-center font-['Open_Sans',sans-serif] leading-[30px] font-bold tracking-[-1px] whitespace-nowrap text-[#e6e6e6]">
          <span className="text-[24px]">R</span>
          <span className="text-[20px]">V</span>
          <span className="text-[14px] italic">iz</span>
        </div>
        <div className="ml-px text-[19.800px] whitespace-nowrap">turtlebot3_gma...</div>
      </div>
      <div className="mr-[49px] ml-auto flex w-[155px] flex-col items-center whitespace-nowrap">
        <div className="text-[19.600px] leading-[23px] font-bold">11:05</div>
        <div className="text-[19.700px] leading-[23px]">Sunday 27 June</div>
      </div>
    </div>
  );
}

export default function App() {
  return (
    <div className="h-[1820px] w-[2862px] overflow-hidden bg-white px-[112px] pt-[76px]">
      <div className="flex h-[1596px] w-[2638px] flex-col overflow-hidden rounded-[20px] bg-black font-['Inter',sans-serif] shadow-[0_0_2px_1px_rgba(0,0,0,0.25),0_38px_90px_rgba(0,0,0,0.38)]">
        <BrowserToolbar />
        <TabBar />
        <div className="flex h-[1388px] shrink-0">
          <div className="w-[43px] shrink-0" />
          <RvizWindow />
          <div className="flex grow justify-end pt-[10px] pr-[10px]">
            <div className="flex h-[72px] w-32 items-center justify-center rounded-lg bg-[#f5f5f5]">
              <svg viewBox="0 0 44 44" className="size-11" fill="none" stroke="#1b1b1b" strokeWidth="3.600">
                <path d="M11 22V4h29v28H22" />
                <path d="M3.500 24h17v16h-17z" />
                <path d="M18 26L33 11M21 11.500h12v12" />
              </svg>
            </div>
          </div>
        </div>
        <Taskbar />
      </div>
    </div>
  );
}
